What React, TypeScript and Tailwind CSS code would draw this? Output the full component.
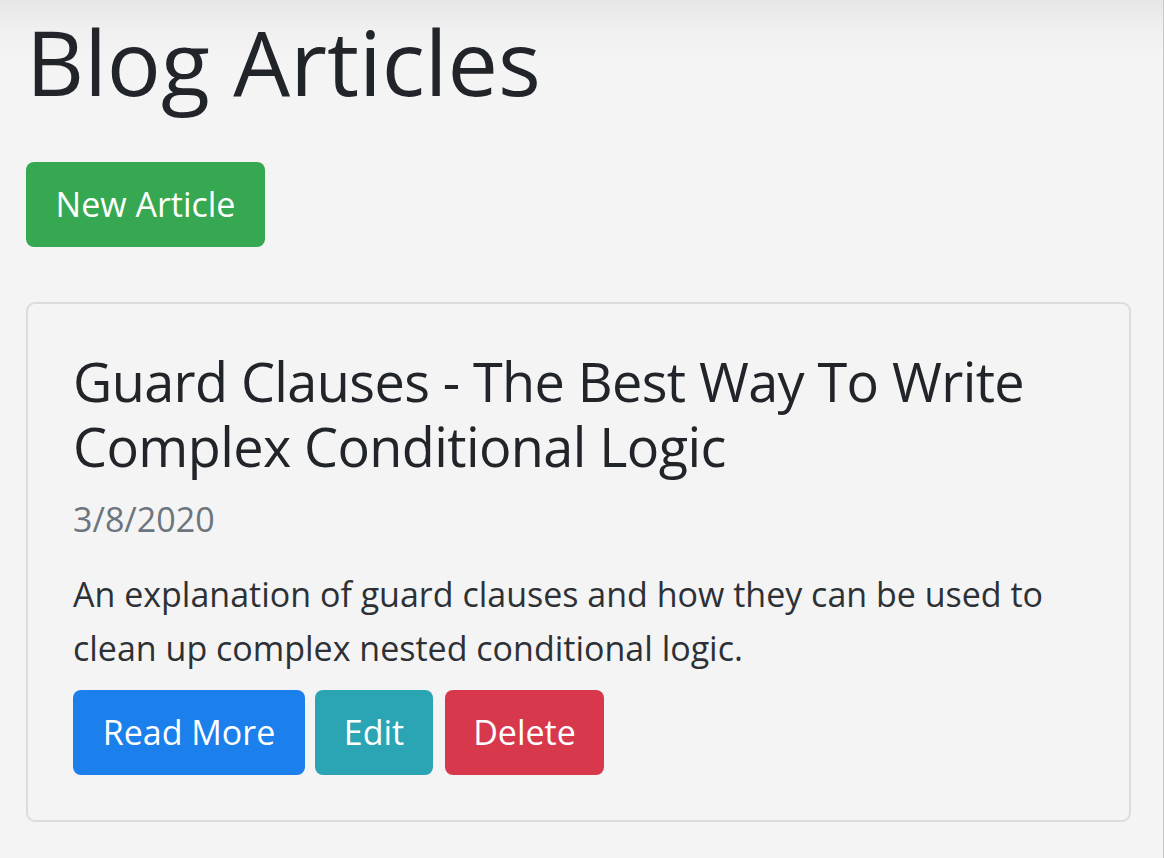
import React from "react";

export default function App() {
  return (
    <div
      className="min-h-[858px] w-[1164px] border-r border-[#c8c8c8] bg-[linear-gradient(to_bottom,#e6e6e6_0px,#f0f0f0_30px,#f4f4f4_60px,#f4f4f4_100%)] pl-[26px] pt-[3px] text-[#212529]"
      style={{ fontFamily: '"Open Sans", "Noto Sans", sans-serif' }}
    >
      <h1 className="text-[90px] leading-[1.3] font-normal tracking-normal">Blog Articles</h1>
      <div className="mt-[42px]">
        <button className="flex h-[85px] w-[239px] items-center justify-center rounded-[8px] bg-[#36a852] text-[34px] text-white">
          New Article
        </button>
      </div>
      <div className="mt-[55px] w-[1105px] rounded-[9px] border-2 border-[#dcdcdc] px-[45px] pb-[45px] pt-[45px]">
        <h4 className="text-[54px] leading-[65px] font-normal tracking-[-0.6px]">
          Guard Clauses - The Best Way To Write Complex Conditional Logic
        </h4>
        <div className="mt-[13px] text-[34px] leading-[54px] text-[#6c757d]">3/8/2020</div>
        <p className="mt-[21px] text-[34px] leading-[54px] text-[#2d3135]">
          An explanation of guard clauses and how they can be used to clean up complex nested conditional logic.
        </p>
        <div className="mt-[15px] flex gap-[10px]">
          <button className="flex h-[85px] w-[232px] items-center justify-center rounded-[8px] bg-[#1b7fec] text-[34px] text-white">
            Read More
          </button>
          <button className="flex h-[85px] w-[118px] items-center justify-center rounded-[8px] bg-[#2ba4b4] text-[34px] text-white">
            Edit
          </button>
          <button className="ml-[2px] flex h-[85px] w-[159px] items-center justify-center rounded-[8px] bg-[#d8384c] text-[34px] text-white">
            Delete
          </button>
        </div>
      </div>
    </div>
  );
}
